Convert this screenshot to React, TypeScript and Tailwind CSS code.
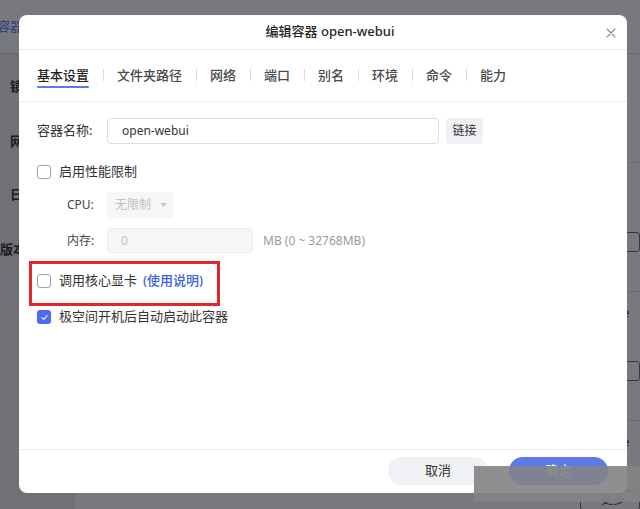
import React from "react";

const TABS = ["基本设置", "文件夹路径", "网络", "端口", "别名", "环境", "命令", "能力"];

const SIDE_ITEMS = [
  { label: "镜像", cls: "mt-[22px] pl-[10px]" },
  { label: "网络", cls: "mt-[35px] pl-[10px]" },
  { label: "日志", cls: "mt-[33px] pl-[10px]" },
  { label: "版本", cls: "mt-[35px] pl-0" },
];

const BG_ROWS = [
  { title: "lar", sub: "16" },
  { title: "ate", sub: "小" },
  { title: "ate", sub: "小" },
];

function Checkbox({ checked = false }: { checked?: boolean }) {
  if (checked) {
    return (
      <span className="flex h-[14px] w-[14px] shrink-0 items-center justify-center rounded-[3px] bg-[#4d6cf0]">
        <svg viewBox="0 0 12 12" width="9" height="9" fill="none" stroke="white" strokeWidth="1.4" strokeLinecap="round" strokeLinejoin="round">
          <path d="M2.5 6.2 5 8.6 9.6 3.6" />
        </svg>
      </span>
    );
  }
  return <span className="h-[14px] w-[14px] shrink-0 rounded-[3px] border border-[#a3a3a3] bg-white" />;
}

// the app page behind the dialog, in its own (undimmed) colours
function Background() {
  return (
    <div className="flex h-[509px] w-[640px] flex-col">
      <header className="flex h-[54px] shrink-0 items-center border-b border-[#d4d6de] bg-[#f0f2fa]">
        <span className="ml-[-3px] text-[13px] font-medium text-[#6a8cff]">容器</span>
      </header>
      <div className="flex flex-1">
        <aside className="flex w-[92px] flex-col bg-[#e0e2ea] text-[13px] font-bold text-[#38383e]">
          {SIDE_ITEMS.map((item) => (
            <span key={item.label} className={`leading-5 ${item.cls}`}>
              {item.label}
            </span>
          ))}
        </aside>
        <main className="flex flex-1 flex-col bg-[#f2f2fa] pt-[108px]">
          {BG_ROWS.map((row, i) => (
            <div key={i} className="flex h-[129px] flex-col border-t border-[#d4d6de] pl-[535px] pt-[10px] text-[13px]">
              <span className="leading-5 text-[#46464c]">{row.title}</span>
              <span className="leading-5 text-[#6c6e74]">{row.sub}</span>
              <span className="ml-[-30px] mt-[19px] flex h-[20px] w-[60px] items-center justify-end rounded-[3px] border border-[#6c6e74] pr-[14px] text-[12px] text-[#4c4e54]">
                更多
              </span>
            </div>
          ))}
        </main>
      </div>
    </div>
  );
}

function Tab({ label, first, active }: { label: string; first: boolean; active: boolean }) {
  return (
    <div className="flex items-start">
      {!first && <span className="mx-[13.5px] mt-[4px] h-[12px] w-px bg-[#dadada]" />}
      <div className="flex flex-col">
        <span className={active ? "text-[13px] font-medium leading-5 text-[#1f1f1f]" : "text-[13px] font-medium leading-5 text-[#4a4a4a]"}>{label}</span>
        <span className={active ? "mt-[1px] h-[2px] w-full rounded-full bg-[#5b78f0]" : "mt-[1px] h-[2px] w-full"} />
      </div>
    </div>
  );
}

export default function App() {
  return (
    <div className="relative h-[509px] w-[640px] overflow-hidden bg-[#eaebf0] font-[Noto_Sans,Noto_Sans_CJK_SC,sans-serif]">
      <Background />

      {/* dialog; its spread shadow is the dark backdrop over the page */}
      <div className="absolute left-[19px] top-[15px] flex h-[478px] w-[608px] flex-col overflow-hidden rounded-[8px] bg-white shadow-[0_0_0_800px_rgba(0,0,0,0.5)]">
        <div className="flex h-[35px] shrink-0 items-center border-b border-[#ededed]">
          <span className="ml-[35px] flex-1 text-center text-[13px] font-medium text-[#262626]">编辑容器 open-webui</span>
          <svg viewBox="0 0 10 10" width="10" height="10" className="mr-[11px] mt-[2px]" stroke="#8a8a8a" strokeWidth="1.1" strokeLinecap="round">
            <path d="M1 1 9 9M9 1 1 9" />
          </svg>
        </div>

        <div className="flex shrink-0 items-start border-b border-[#ededed] px-[18px] pb-[13px] pt-[15px]">
          {TABS.map((tab, i) => (
            <Tab key={tab} label={tab} first={i === 0} active={i === 0} />
          ))}
        </div>

        <div className="flex flex-1 flex-col px-[18px] pt-[16px] text-[13px] text-[#333]">
          <div className="flex h-[26px] items-center">
            <span className="w-[70px] shrink-0">容器名称:</span>
            <div className="flex h-[26px] w-[332px] items-center rounded-[4px] border border-[#dedede] pl-[14px] text-[12px] text-[#333]">open-webui</div>
            <div className="ml-[7px] flex h-[26px] w-[37px] items-center justify-center rounded-[4px] bg-[#f0f1f5] text-[12px] text-[#333]">链接</div>
          </div>

          <div className="mt-[17px] flex h-[22px] items-center gap-[8px]">
            <Checkbox />
            <span>启用性能限制</span>
          </div>

          <div className="mt-[9px] flex h-[26px] items-center">
            <span className="w-[70px] shrink-0 pl-[30px] text-[12px] text-[#444]">CPU:</span>
            <div className="flex h-[26px] w-[67px] items-center rounded-[4px] bg-[#f5f6f8] pl-[8px] text-[12px] text-[#c2c2c2]">
              <span>无限制</span>
              <svg viewBox="0 0 8 5" width="7" height="4" className="ml-[9px]" fill="#c4c4c4">
                <path d="M0 0h8L4 5z" />
              </svg>
            </div>
          </div>

          <div className="mt-[10px] flex h-[25px] items-center">
            <span className="w-[70px] shrink-0 pl-[30px] text-[12px] text-[#444]">内存:</span>
            <div className="flex h-[25px] w-[146px] items-center rounded-[4px] border border-[#ececec] bg-[#f5f6f8] pl-[13px] text-[12px] text-[#c2c2c2]">0</div>
            <span className="ml-[10px] text-[12px] text-[#9a9a9a]">MB (0 ~ 32768MB)</span>
          </div>

          <div className="ml-[-8px] mt-[8px] flex h-[45px] w-[191px] items-start border-[3px] border-[#e4262b] pl-[5px] pt-[6px]">
            <div className="flex h-[22px] items-center gap-[8px]">
              <Checkbox />
              <span>调用核心显卡</span>
              <span className="-ml-[2px] font-medium text-[#3b62e0]">(使用说明)</span>
            </div>
          </div>

          <div className="flex h-[22px] items-center gap-[8px]">
            <Checkbox checked />
            <span>极空间开机后自动启动此容器</span>
          </div>
        </div>

        <div className="flex h-[44px] shrink-0 items-start justify-end gap-[21px] border-t border-[#ededed] pr-[19px] pt-[7px]">
          <div className="flex h-[28px] w-[100px] items-center justify-center rounded-full bg-[#f0f1f5] text-[13px] text-[#333]">取消</div>
          <div className="flex h-[28px] w-[99px] items-center justify-center rounded-full bg-[#5b7ce8] text-[13px] text-white">确定</div>
        </div>
      </div>

      {/* grey watermark patch over the bottom-right corner */}
      <div className="absolute left-[474px] top-[466px] h-[36px] w-[166px] bg-[#838386]/90" />
    </div>
  );
}
